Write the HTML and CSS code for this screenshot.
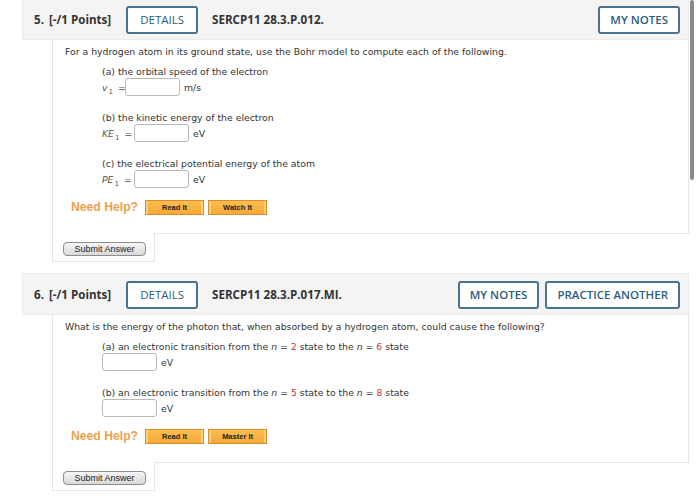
FILE: index.html
```html
<!DOCTYPE html>
<html>
<head>
<meta charset="utf-8">
<link rel="stylesheet" href="styles.css">
</head>
<body>
<div class="page">
  <section class="question">
    <header class="qhead">
      <span class="qnum">5.</span>
      <span class="pts">[-/1 Points]</span>
      <button class="hbtn details">DETAILS</button>
      <span class="code">SERCP11 28.3.P.012.</span>
      <span class="spacer"></span>
      <button class="hbtn">MY NOTES</button>
    </header>
    <div class="qbody">
      <div class="content">
        <p class="intro">For a hydrogen atom in its ground state, use the Bohr model to compute each of the following.</p>
        <div class="part">
          <p class="ptext">(a) the orbital speed of the electron</p>
          <div class="arow"><span class="lab lab-v"><i>v</i><sub>1</sub> =</span><span class="inp"></span><span class="unit">m/s</span></div>
        </div>
        <div class="part">
          <p class="ptext">(b) the kinetic energy of the electron</p>
          <div class="arow"><span class="lab"><i>KE</i><sub>1</sub> =</span><span class="inp"></span><span class="unit">eV</span></div>
        </div>
        <div class="part">
          <p class="ptext">(c) the electrical potential energy of the atom</p>
          <div class="arow"><span class="lab"><i>PE</i><sub>1</sub> =</span><span class="inp"></span><span class="unit">eV</span></div>
        </div>
        <div class="help"><span class="need">Need Help?</span><button class="obtn">Read It</button><button class="obtn">Watch It</button></div>
      </div>
      <div class="foot">
        <div class="submit-box"><button class="submit">Submit Answer</button></div>
        <div class="foot-fill"></div>
      </div>
    </div>
  </section>

  <section class="question">
    <header class="qhead">
      <span class="qnum">6.</span>
      <span class="pts">[-/1 Points]</span>
      <button class="hbtn details">DETAILS</button>
      <span class="code">SERCP11 28.3.P.017.MI.</span>
      <span class="spacer"></span>
      <button class="hbtn">MY NOTES</button>
      <button class="hbtn">PRACTICE ANOTHER</button>
    </header>
    <div class="qbody">
      <div class="content">
        <p class="intro">What is the energy of the photon that, when absorbed by a hydrogen atom, could cause the following?</p>
        <div class="part">
          <p class="ptext">(a) an electronic transition from the <i>n</i> = <span class="red">2</span> state to the <i>n</i> = <span class="red">6</span> state</p>
          <div class="arow"><span class="inp"></span><span class="unit">eV</span></div>
        </div>
        <div class="part">
          <p class="ptext">(b) an electronic transition from the <i>n</i> = <span class="red">5</span> state to the <i>n</i> = <span class="red">8</span> state</p>
          <div class="arow"><span class="inp"></span><span class="unit">eV</span></div>
        </div>
        <div class="help"><span class="need">Need Help?</span><button class="obtn">Read It</button><button class="obtn">Master It</button></div>
      </div>
      <div class="foot">
        <div class="submit-box"><button class="submit">Submit Answer</button></div>
        <div class="foot-fill"></div>
      </div>
    </div>
  </section>
</div>
<div class="scrollbar"></div>
</body>
</html>
```

FILE: styles.css
```css
html, body {
  margin: 0;
  padding: 0;
  background: #ffffff;
  overflow: hidden;
}
body {
  font-family: "DejaVu Sans", Verdana, sans-serif;
  color: #333333;
}
.page {
  margin: -2px 0 0 22px;
  width: 667px;
  display: flex;
  flex-direction: column;
  gap: 11px;
}
.qhead {
  height: 42px;
  box-sizing: border-box;
  background: #f4f4f4;
  border: 1px solid #ebebeb;
  display: flex;
  align-items: center;
  padding: 0 8px 0 11px;
  font-family: "Open Sans", sans-serif;
  font-weight: 700;
  font-size: 11.6px;
  color: #333;
}
.qnum { margin-right: 5px; }
.pts { margin-right: 15px; }
.code { margin-left: 14px; }
.spacer { flex: 1; }
.hbtn {
  font-family: "Open Sans", sans-serif;
  font-weight: 600;
  font-size: 11.5px;
  color: #2c5d80;
  background: #ffffff;
  border: 2px solid #4a7391;
  border-radius: 3px;
  height: 28px;
  padding: 0 10px;
  margin-left: 6px;
  margin-top: 1px;
}
.details { margin-left: 0; font-weight: 500; padding: 0 12px; }
.qbody {
  margin-left: 30px;
  border-left: 1px solid #e6e6e6;
}
.content {
  border-right: 1px solid #e6e6e6;
  padding: 5px 0 17px 12px;
  font-size: 9.3px;
  line-height: 13px;
}
.intro { margin: 0; }
.part {
  margin-left: 37px;
  margin-top: 7px;
}
.part + .part { margin-top: 15px; }
.ptext { margin: 0; }
.arow {
  display: flex;
  align-items: center;
  height: 18px;
}
.lab {
  display: inline-block;
  width: 32px;
  color: #555;
  white-space: nowrap;
}
.lab-v { width: 23px; }
.lab sub { font-size: 7px; margin: 0 2px 0 1px; vertical-align: -3px; line-height: 0; }
.inp {
  display: inline-block;
  width: 53px;
  height: 16px;
  border: 1px solid #b9b9b9;
  border-radius: 3px;
  background: #fff;
}
.unit { margin-left: 4px; }
.red { color: #c8393b; }
.help {
  display: flex;
  align-items: center;
  margin: 10px 0 0 6px;
  height: 18px;
}
.need {
  font-family: "Liberation Sans", Arial, sans-serif;
  font-weight: bold;
  font-size: 12.2px;
  color: #eaa24e;
  margin-right: 7px;
}
.obtn {
  font-family: "Liberation Sans", Arial, sans-serif;
  font-weight: bold;
  font-size: 7.5px;
  color: #222;
  width: 59px;
  height: 15px;
  padding: 0;
  margin-right: 4px;
  background: linear-gradient(#fbbd4f, #f7a93a);
  border: 1px solid #d88c2a;
  box-shadow: inset 2px 0 0 #fccf7c, inset -2px 0 0 #fccf7c;
}
.foot { display: flex; }
.submit-box {
  width: 102px;
  border-right: 1px solid #e6e6e6;
  border-bottom: 1px solid #e6e6e6;
  padding: 9px 0 0 10px;
  box-sizing: border-box;
  height: 29px;
}
.foot-fill {
  flex: 1;
  border-top: 1px solid #e6e6e6;
}
.submit {
  display: block;
  font-family: "Liberation Sans", Arial, sans-serif;
  font-size: 9px;
  color: #222;
  width: 83px;
  height: 14px;
  padding: 0;
  border: 1px solid #8d8d8d;
  border-radius: 4px;
  background: linear-gradient(#f6f6f6, #d9d9d9);
}
.scrollbar {
  position: absolute;
  top: 0;
  left: 690px;
  width: 4px;
  height: 180px;
  background: #8a8a8a;
  border-radius: 2px;
}
```
